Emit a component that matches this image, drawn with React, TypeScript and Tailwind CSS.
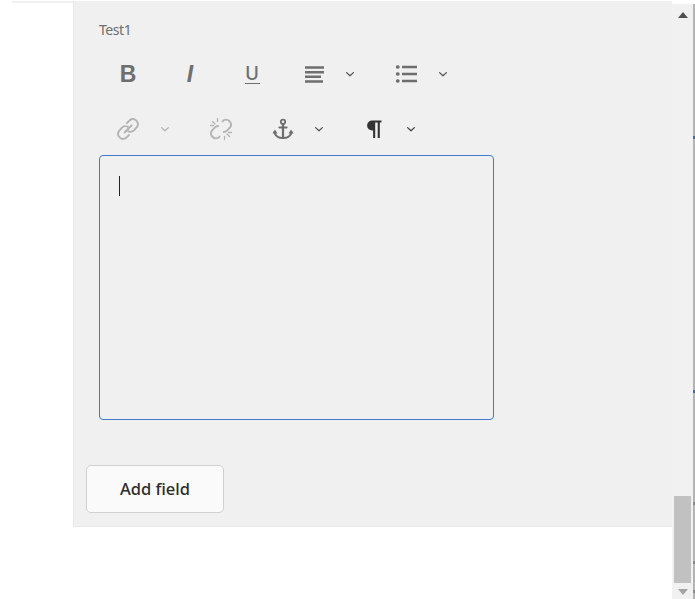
const Chevron = ({ className = "" }: { className?: string }) => (
  <svg viewBox="0 0 12 12" className={`w-3 h-3 ${className}`} fill="none" stroke="currentColor" strokeWidth="1.3" strokeLinecap="round" strokeLinejoin="round">
    <path d="M2.6 4.6 6 7.8l3.4-3.2" />
  </svg>
);

const Icon = ({ children, className = "" }: { children: React.ReactNode; className?: string }) => (
  <svg viewBox="0 0 24 24" className={`w-6 h-6 ${className}`} fill="none" stroke="currentColor">
    {children}
  </svg>
);

const LinkPaths = () => (
  <g strokeWidth="1.9" strokeLinecap="round">
    <path d="M8.5 15.5 15.5 8.5" />
    <path d="M11 6l2.8-2.8a5 5 0 0 1 7 7L18 13.4c-1.9 1.9-4.9 1.9-6.5.2" />
    <path d="M13 18l-2.8 2.8a5 5 0 0 1-7-7L6 10.6c1.9-1.9 4.9-1.9 6.5-.2" />
  </g>
);

export default function App() {
  return (
    <div className="flex h-[599px] w-[695px] overflow-hidden bg-white font-['Open_Sans',sans-serif]">
      <div className="w-[73px] shrink-0 pt-px pl-3">
        <div className="h-[2px] bg-[#f0f0f0]" />
      </div>
      <div className="flex h-[526px] w-[599px] shrink-0 mt-px flex-col border-l border-b border-[#e8e8e8] bg-[#f0f0f0]">
        <div className="ml-[25px] mt-[19px] h-5 text-[14px] leading-5 tracking-[-0.45px] text-[#6e6e6e] font-['Noto_Sans',sans-serif]">Test1</div>

        <div className="mt-[22px] flex h-6 items-center pl-[42px] text-[#6e6e6e]">
          <span className="flex w-6 justify-center font-['Liberation_Sans',sans-serif] text-[23px] font-bold leading-6">B</span>
          <span className="ml-[38px] flex w-6 justify-center font-['Liberation_Sans',sans-serif] text-[23px] font-bold italic leading-6">I</span>
          <span className="ml-[38px] flex w-6 flex-col items-center">
            <span className="font-['Noto_Sans',sans-serif] text-[19px] font-medium leading-[19px]">U</span>
            <span className="h-[1.5px] w-[15px] bg-[#6e6e6e]" />
          </span>
          <Icon className="ml-[38px]">
            <path strokeWidth="2.5" d="M3 5.5h19M3 10.2h19M3 14.8h16M3 19.5h18" />
          </Icon>
          <Chevron className="ml-[18px] text-[#555]" />
          <Icon className="ml-[38px]">
            <g strokeWidth="2.3">
              <path d="M8 5h15M8 12h15M8 19h15" />
              <path strokeWidth="3.4" strokeLinecap="round" d="M3.5 5h.5M3.5 12h.5M3.5 19h.5" />
            </g>
          </Icon>
          <Chevron className="ml-[19px] text-[#555]" />
        </div>

        <div className="mt-[31px] flex h-6 items-center pl-[42px]">
          <Icon className="text-[#b4b4b4]"><LinkPaths /></Icon>
          <Chevron className="ml-[19px] text-[#b4b4b4]" />
          <Icon className="ml-[38px] text-[#b4b4b4]">
            <g strokeWidth="1.9" strokeLinecap="round">
              <path d="M13.5 4.5l.8-1a5 5 0 0 1 6.8 7L18 13.6c-.9.9-2 1.4-3.2 1.4" />
              <path d="M10.5 19.5l-.8 1a5 5 0 0 1-6.8-7L6 10.4c.9-.9 2-1.4 3.2-1.4" />
              <path strokeWidth="1.3" d="M3.5 4.5 6 7M8.5 1.5v3M1.5 8.5h3M20.5 19.5 18 17M15.5 22.5v-3M22.5 15.5h-3" />
            </g>
          </Icon>
          <Icon className="ml-[38px] text-[#6e6e6e]">
            <g strokeWidth="2.2" strokeLinecap="round">
              <circle cx="12" cy="4.8" r="2.2" strokeWidth="1.8" />
              <path d="M12 7.5V21M8.5 10.5h7" />
              <path d="M3.5 15c.4 3.6 4 6 8.5 6s8.1-2.4 8.5-6" />
            </g>
            <path fill="currentColor" stroke="none" d="M1.5 16.5 4 12.5l2.5 4zM17.5 16.5l2.5-4 2.5 4z" />
          </Icon>
          <Chevron className="ml-[18px] text-[#555]" />
          <Icon className="ml-[37px] -translate-x-px text-[#333]">
            <path fill="currentColor" stroke="none" d="M11 3.5h9.5v2h-1.7V21h-2.1V5.5h-2.5V21h-2.1v-7.5h-1a5 5 0 0 1 0-10z" />
          </Icon>
          <Chevron className="ml-[19px] text-[#444]" />
        </div>

        <div className="ml-[25px] mt-[14px] h-[265px] w-[395px] rounded-[4px] border-[1.5px] border-[#3f7ccc] pl-[19px] pt-[20px]">
          <div className="h-5 w-px bg-[#222]" />
        </div>

        <button className="ml-3 mt-[45px] h-[48px] w-[138px] rounded-[5px] border border-[#d0d0d0] bg-[#fafafa] font-['Noto_Sans',sans-serif] text-[16.5px] font-medium text-[#2c2c2c]">
          Add field
        </button>
      </div>

      <div className="mt-1 flex w-[21px] shrink-0 flex-col items-center bg-[#f1f1f1]">
        <svg viewBox="0 0 10 6" className="mt-[8px] h-[6px] w-[10px] fill-[#505050]"><path d="M5 0l5 6H0z" /></svg>
        <div className="mt-[478px] h-[87px] w-[17px] bg-[#c1c1c1]" />
        <svg viewBox="0 0 10 6" className="mt-[6px] h-[6px] w-[10px] fill-[#a3a3a3]"><path d="M0 0h10L5 6z" /></svg>
      </div>

      <div className="relative mt-1 w-[2px] shrink-0 bg-[#b4b4b4]">
        <div className="absolute left-0 top-[132px] h-[3px] w-[2px] bg-[#3f6fa8]" />
        <div className="absolute left-0 top-[386px] h-[3px] w-[2px] bg-[#3f6fa8]" />
        <div className="absolute left-0 top-[498px] h-[3px] w-[2px] bg-[#8a8a8a]" />
        <div className="absolute left-0 top-[557px] h-[3px] w-[2px] bg-[#8a8a8a]" />
        <div className="absolute left-0 top-[586px] h-[3px] w-[2px] bg-[#8a8a8a]" />
      </div>
    </div>
  );
}
